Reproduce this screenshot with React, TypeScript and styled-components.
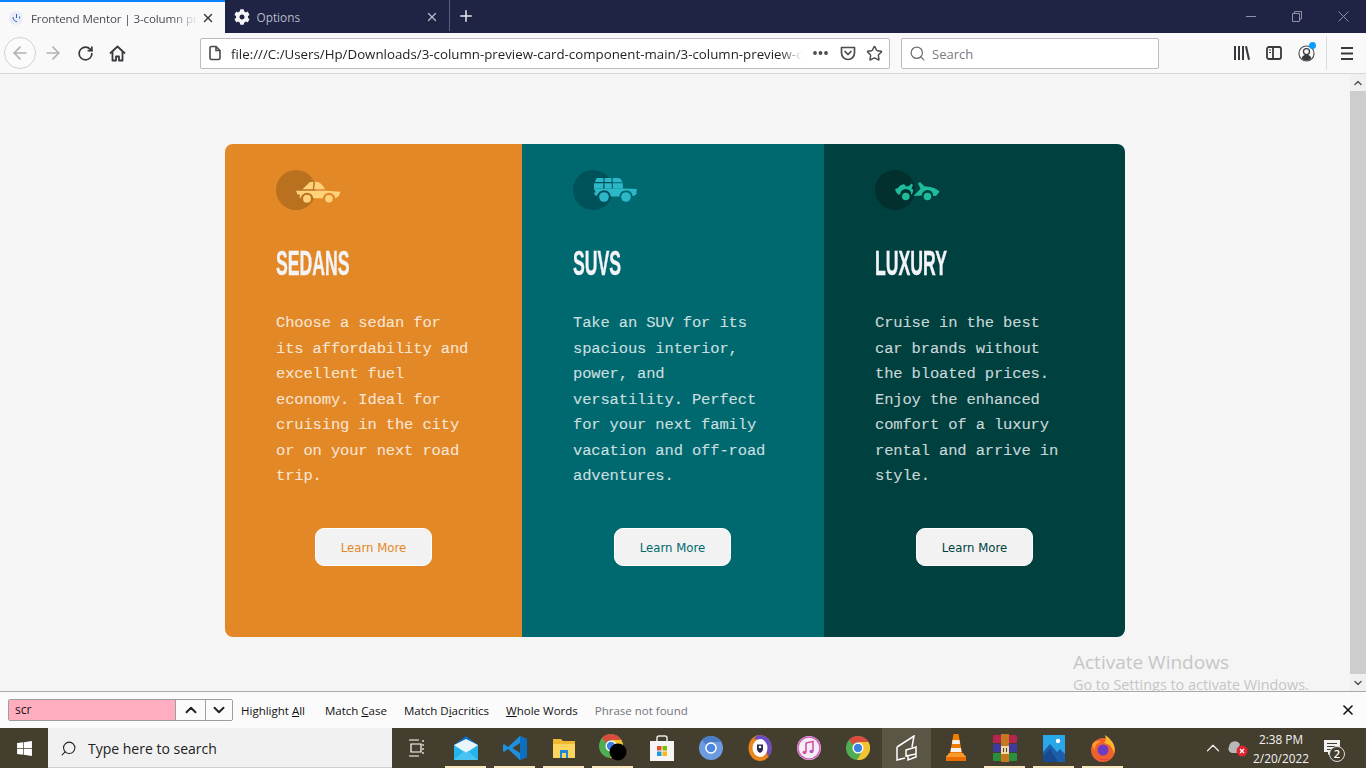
import React from 'react';
import styled, { createGlobalStyle } from 'styled-components';
import { FaCog, FaWindows } from 'react-icons/fa';
import { ArrowLeft, ArrowRight, RotateCw, X, Plus, ChevronUp, ChevronDown, Search as SearchGlyph, Star } from 'lucide-react';

const Global = createGlobalStyle`
  html, body { margin: 0; padding: 0; overflow: hidden; background: #f5f5f5; }
  * { box-sizing: border-box; }
`;

const UI = `"Open Sans", "Noto Sans", sans-serif`;

const Page = styled.div`
  width: 1366px; height: 768px; display: flex; flex-direction: column; overflow: hidden;
  font-family: ${UI}; color: #1a1a1a;
`;

/* ---------- tab strip ---------- */
const TabStrip = styled.div`
  height: 33px; flex: none; display: flex; background: #1f2444; align-items: stretch;
`;
const Tab = styled.div<{ $active?: boolean }>`
  width: 224.5px; flex: none; display: flex; align-items: center; padding: 0 10px 0 9px;
  gap: ${p => (p.$active ? 8 : 7)}px; font-size: ${p => (p.$active ? 11.6 : 11.8)}px;
  background: ${p => (p.$active ? '#f9f9fa' : 'transparent')};
  color: ${p => (p.$active ? '#4a4a56' : '#b9bbc8')};
  border-top: ${p => (p.$active ? '2px solid #0a84ff' : 'none')};
`;
const TabTitle = styled.span<{ $fade?: boolean }>`
  flex: 1; white-space: nowrap; overflow: hidden; padding-top: 1px;
  ${p => p.$fade && `letter-spacing: -0.14px; margin-right: -5px; -webkit-mask-image: linear-gradient(90deg, #000 84%, transparent 100%); mask-image: linear-gradient(90deg, #000 84%, transparent 100%);`}
`;
const NewTab = styled.div`
  width: 33px; display: flex; align-items: center; justify-content: center; border-left: 1px solid #5b5e78; margin: 0 0 2px; color: #e8e8ee;
`;
const WindowControls = styled.div`
  margin-left: auto; display: flex; color: #8e90a4;
`;
const WinCtl = styled.div`
  width: 46px; display: flex; align-items: center; justify-content: center;
`;

/* ---------- nav bar ---------- */
const NavBar = styled.div`
  height: 41px; flex: none; display: flex; align-items: center; background: #f9f9fa;
  border-bottom: 1px solid #d7d7db; padding: 0 0 0 4px; color: #4a4a4f;
`;
const BackCircle = styled.div`
  width: 32px; height: 32px; border-radius: 50%; border: 1px solid #d2d2d6; display: flex; align-items: center; justify-content: center; color: #b1b1b3; flex: none; background: #fbfbfb;
`;
const NavSlot = styled.div<{ $w?: number; $color?: string }>`
  width: ${p => p.$w ?? 32}px; flex: none; display: flex; align-items: center; justify-content: center;
  color: ${p => p.$color ?? '#4a4a4f'}; position: relative;
`;
const UrlBar = styled.div`
  margin-left: 67px; width: 690px; height: 31px; flex: none; background: #fff; border: 1px solid #bcbcbe; border-radius: 2px;
  display: flex; align-items: center; padding-left: 6px;
`;
const UrlText = styled.div`
  width: 571px; margin-left: 8px; font-size: 13.3px; white-space: nowrap; overflow: hidden; color: #1f1f1f; flex: none; padding-top: 1px;
  -webkit-mask-image: linear-gradient(90deg, #000 96%, transparent 100%); mask-image: linear-gradient(90deg, #000 96%, transparent 100%);
`;
const SearchBar = styled.div`
  margin-left: 11px; width: 258px; height: 31px; flex: none; background: #fff; border: 1px solid #bcbcbe; border-radius: 2px;
  display: flex; align-items: center; padding-left: 7px; gap: 6px; font-size: 13px; color: #7a7a7e; margin-right: 67px;
`;
const SearchLabel = styled.span`
  padding-top: 1px;
`;
const Dot = styled.span`
  position: absolute; right: 6px; top: -3px; width: 7px; height: 7px; border-radius: 50%; background: #0a9dff;
`;
const ToolSep = styled.div`
  width: 1px; height: 34px; background: #dcdcde; margin-left: 4px; flex: none;
`;

/* ---------- content ---------- */
const Middle = styled.div`
  flex: 1; min-height: 0; display: flex; position: relative; overflow: hidden; background: #f5f5f5;
`;
const Main = styled.main`
  flex: 1; padding: 70px 0 0 225px;
`;
const Card = styled.section`
  width: 900px; height: 493px; display: flex; border-radius: 8px; overflow: hidden;
`;
const Column = styled.article<{ $bg: string; $w: number }>`
  width: ${p => p.$w}px; flex: none; background: ${p => p.$bg}; display: flex; flex-direction: column; padding-top: 26px;
`;
const Body = styled.div`
  padding-left: 51px; display: flex; flex-direction: column;
`;
const IconWrap = styled.div`
  position: relative; width: 70px; height: 40px;
`;
const Circle = styled.div<{ $c: string }>`
  width: 40px; height: 40px; border-radius: 50%; background: ${p => p.$c};
`;
const CarSvg = styled.svg<{ $left: number; $top: number }>`
  position: absolute; left: ${p => p.$left}px; top: ${p => p.$top}px; overflow: visible;
`;
const Title = styled.h2`
  margin: 33px 0 0; height: 40px; line-height: 40px; font-family: "Liberation Sans", sans-serif;
  font-weight: 700; font-size: 35px; color: #f4f4f8; transform: scaleX(0.505); transform-origin: left center; white-space: nowrap;
  -webkit-text-stroke: 0.4px #f4f4f8;
`;
const Para = styled.p`
  margin: 28px 0 0; font-family: "Liberation Mono", monospace; font-size: 15.5px; letter-spacing: -0.15px; line-height: 25.55px;
  color: rgba(255,255,255,0.78); white-space: pre-line; -webkit-text-stroke: 0.15px rgba(255,255,255,0.6);
`;
const Learn = styled.button<{ $c: string; $nudge?: number }>`
  margin-top: auto; margin-bottom: 71px; margin-right: ${p => p.$nudge ?? 0}px; align-self: center; width: 117px; height: 38px; border-radius: 9px; border: 1px solid #fff; background: #f2f2f2;
  color: ${p => p.$c}; font-family: "DejaVu Sans", sans-serif; font-size: 11.7px; padding: 1px 0 0;
`;
const ScrollTrack = styled.div`
  width: 16px; flex: none; background: #f0f0f0; display: flex; flex-direction: column; align-items: center; color: #555; justify-content: space-between; padding: 0;
`;
const ScrollArrow = styled.div`
  height: 17px; display: flex; align-items: center; justify-content: center; flex: none;
`;
const ScrollThumb = styled.div`
  width: 100%; flex: 1; background: #cdcdcd;
`;
const Activate = styled.div`
  position: absolute; left: 1073px; top: 575px; color: #c6c6c6; white-space: nowrap; pointer-events: none; font-family: "Open Sans", sans-serif;
`;
const ActivateBig = styled.div`
  font-size: 19px; line-height: 26px;
`;
const ActivateSmall = styled.div`
  font-size: 14.4px; line-height: 20px; margin-top: 0;
`;

/* ---------- find bar ---------- */
const FindBar = styled.div`
  height: 37px; flex: none; border-top: 1px solid #a9a9ab; background: #fbfbfb; display: flex; align-items: center; padding: 0 0 0 8px; font-size: 11.5px; color: #111;
`;
const FindBox = styled.div`
  display: flex; height: 22px; border: 1px solid #9e9ea2; border-radius: 2px; overflow: hidden; flex: none;
`;
const FindInput = styled.div`
  width: 167px; background: #ffadbf; padding: 0 0 0 6px; font-size: 12px; line-height: 20px; border-right: 1px solid #9e9ea2;
`;
const FindBtn = styled.div<{ $sep?: boolean }>`
  width: ${p => (p.$sep ? 27 : 29)}px; background: #fbfbfb; display: flex; align-items: center; justify-content: center; color: #222;
  ${p => p.$sep && 'border-left: 1px solid #9e9ea2;'}
`;
const FindOption = styled.span<{ $ml: number; $muted?: boolean }>`
  margin-left: ${p => p.$ml}px; padding-top: 1px; white-space: nowrap; color: ${p => (p.$muted ? '#74747a' : '#111')};
`;
const FindClose = styled.div`
  margin-left: auto; width: 36px; display: flex; justify-content: center; color: #111;
`;

/* ---------- taskbar ---------- */
const Taskbar = styled.div`
  height: 40px; flex: none; background: #443e2e; display: flex; align-items: stretch; color: #fff;
`;
const StartBtn = styled.div`
  width: 48px; flex: none; display: flex; align-items: center; justify-content: center;
`;
const TaskSearch = styled.div`
  width: 344px; flex: none; background: #f1f1f1; color: #222; display: flex; align-items: center; padding: 1px 0 0 12px; gap: 11px; font-size: 14px;
  border-bottom: 1px solid #d0d0d0;
`;
const TaskSlot = styled.div<{ $run?: boolean; $active?: boolean }>`
  width: 49px; flex: none; display: flex; align-items: center; justify-content: center; position: relative;
  background: ${p => (p.$active ? '#5b5546' : 'transparent')};
  ${p => p.$run && `&::after { content: ''; position: absolute; bottom: 0; left: 4px; right: 4px; height: 2px; background: #f6e7c1; }`}
`;
const Tray = styled.div`
  flex: 1; display: flex; align-items: center; position: relative;
`;
const TrayIcon = styled.div<{ $ml: number }>`
  margin-left: ${p => p.$ml}px; display: flex; align-items: center; position: relative; flex: none;
`;
const Clock = styled.div`
  margin-left: -2px; width: 70px; text-align: center; font-size: 11.8px; line-height: 19px; color: #f2f2f2; flex: none; padding-top: 1px;
`;
const Badge = styled.span`
  position: absolute; right: -5px; bottom: -5px; width: 16px; height: 16px; border-radius: 50%; border: 1px solid #ddd; background: #443e2e; color: #fff; font-size: 11px; line-height: 14px; text-align: center; font-weight: 600;
`;

/* ---------- drawings ---------- */
const Favicon = () => (
  <svg width="14" height="14" viewBox="0 0 14 14"><circle cx="7" cy="7" r="7" fill="#e9edf8" /><path d="M7.5 3v4M4 6c0 3 2 4.5 4 4.5M10.5 5.5v2" stroke="#3b5cc4" strokeWidth="1" fill="none" /></svg>
);
const DocIcon = () => (
  <svg width="16" height="16" viewBox="0 0 16 16" fill="none" stroke="#4a4a4f" strokeWidth="1.6" style={{ flex: 'none' }}><path d="M3 3a1.5 1.5 0 0 1 1.5-1.5H9L13 5.5V13a1.5 1.5 0 0 1-1.5 1.5h-7A1.5 1.5 0 0 1 3 13z" /><path d="M9 1.5v4h4" /></svg>
);
const HomeIcon = () => (
  <svg width="17" height="17" viewBox="0 0 17 17" fill="none" stroke="#38383d" strokeWidth="1.8" strokeLinejoin="round"><path d="M1 8.5 8.5 1.5 16 8.5" /><path d="M3.5 7v8.5h3.5v-4h3v4h3.5V7" /></svg>
);
const Pocket = () => (
  <svg width="16" height="15" viewBox="0 0 16 15" fill="none" stroke="#4a4a4f" strokeWidth="1.7" strokeLinejoin="round"><path d="M1.5 1.5h13V7a6.5 6.5 0 0 1-13 0z" /><path d="M5 5.5 8 8.5l3-3" strokeLinecap="round" /></svg>
);
const Library = () => (
  <svg width="16" height="14" viewBox="0 0 16 14" fill="#38383d"><rect x="0" y="0" width="2" height="14" /><rect x="4" y="0" width="2" height="14" /><rect x="8" y="0" width="2" height="14" /><path d="M11 .5l2-.5 3 13.5-2 .5z" /></svg>
);
const Sidebar = () => (
  <svg width="16" height="14" viewBox="0 0 16 14" fill="none" stroke="#38383d" strokeWidth="1.8"><rect x="1" y="1" width="14" height="12" rx="2" /><path d="M7 1v12" /><path d="M3 4h2M3 6.5h2" strokeWidth="1.2" /></svg>
);
const Profile = () => (
  <svg width="17" height="17" viewBox="0 0 18 18" fill="none"><circle cx="9" cy="9" r="8" stroke="#4a4a4f" strokeWidth="1.2" /><circle cx="9" cy="7" r="3.2" fill="none" stroke="#38383d" strokeWidth="1.4" /><path d="M3.8 14c1-3 3-3.5 5.2-3.5s4.200.5 5.200 3.500a7 7 0 0 1-10.400 0z" fill="#38383d" /></svg>
);
const Hamburger = () => (
  <svg width="12" height="13" viewBox="0 0 12 13" fill="#38383d"><rect width="12" height="2" y="0" /><rect width="12" height="2" y="5.500" /><rect width="12" height="2" y="11" /></svg>
);
const Restore = () => (
  <svg width="10" height="11" viewBox="0 0 10 11" fill="none" stroke="currentColor"><path d="M.5 2.500h7v8h-7zM2.500 2.500V.5h7v7.500h-2" /></svg>
);
const Minimize = () => (<svg width="10" height="1" viewBox="0 0 10 1"><rect width="10" height="1" fill="currentColor" /></svg>);
const CloseThin = () => (<svg width="11" height="11" viewBox="0 0 11 11" stroke="currentColor" fill="none"><path d="M.5.5l10 10M10.500.5l-10 10" /></svg>);

const Sedan = () => (
  <CarSvg $left={20} $top={10.5} width="45" height="22" viewBox="0 0 45 22" fill="#ffd27a">
    <path d="M6.500 8.300 14 1 17.500.700 16.800 8.300zM19.200.700C24 .700 27 4 29 8.300H18z" />
    <path d="M0 9.800H30L44.300 10.800C44 13.500 42.500 16.500 39.300 17.300A6.300 6.300 0 0 0 26.800 17.300H17.300A6.300 6.300 0 0 0 4.800 17.300L3 15.500H4.500L3.500 13.500H1.500z" />
    <circle cx="11" cy="17.700" r="3.900" /><circle cx="33" cy="17.700" r="3.800" />
  </CarSvg>
);
const Suv = () => (
  <CarSvg $left={19.5} $top={8} width="45" height="25" viewBox="0 0 45 25" fill="#2cb8c8">
    <path d="M3.500 0H10.500V4H2zM11.700 0H18.500V4H11.500zM19.800 0H25C27 0 28.500 1.500 29.500 4.200H19.800zM1 5.200H10.500L10 10.500H1zM11.500 5.200H18.500L19 10.500H11.500zM19.800 5.200H29.800L30 10.500H20z" />
    <path d="M.5 10.500H30L43.500 11 44 13 43 14 44 15.500 41 18H39.700A6.800 6.800 0 0 0 26.300 18.500H17.700A6.800 6.800 0 0 0 5.500 15L4 17.500H2L1 14.500H3z" />
    <circle cx="11" cy="19" r="4.800" /><circle cx="33" cy="19" r="4.800" />
  </CarSvg>
);
const Luxury = () => (
  <CarSvg $left={20} $top={12} width="45" height="20" viewBox="0 0 45 20" fill="#1ebb9c">
    <path d="M0 7 3 6 5 3.500 9 2 11 4.500 14 4 16.500 1.500 18 3 16.500 6.500 18.500 8 17 12.500H16.300A5.500 5.500 0 0 0 5.300 12.500H3L1 10z" />
    <path d="M18.500 14 25.500 6.800 23 1.500 25 0 29.300 4.300C35 4.500 41 6 44.500 9.700L41 14H38.300A5.800 5.800 0 0 0 26.700 13.500z" />
    <circle cx="10.800" cy="14.500" r="3.800" /><circle cx="32.500" cy="14.500" r="3.800" />
  </CarSvg>
);

const TaskView = () => (
  <svg width="16" height="18" viewBox="0 0 16 18" fill="none" stroke="#fff" strokeWidth="1.200"><path d="M0 1h10M0 17h10M2 5h10v8H2z" /><path d="M14 1v2M14 5v2M14 9v2M14 13v2" /></svg>
);
const Mail = () => (
  <svg width="24" height="24" viewBox="0 0 24 24"><path d="M0 9 12 0 24 9V24H0z" fill="#0b6fc4" /><path d="M0 9H24V24H0z" fill="#25b4ee" /><path d="M0 9 12 17 24 9 12 3z" fill="#e8f5fc" /><path d="M0 24 10 15 12 17 14 15 24 24z" fill="#48c4f3" /></svg>
);
const VsCode = () => (
  <svg width="24" height="24" viewBox="0 0 24 24"><path d="M17 0 24 3V21L17 24 5 13 1 16 0 15V9L1 8 5 11zM17 7 9.500 12 17 17z" fill="#1f8fe0" /><path d="M17 0 24 3V21L17 24z" fill="#0d6fc0" /></svg>
);
const Folder = () => (
  <svg width="22" height="22" viewBox="0 0 22 22"><path d="M0 2H8L10 4H22V21H0z" fill="#f0b92f" /><path d="M0 7H22V21H0z" fill="#fbd55e" /><path d="M7 13H15V21H13V16H9V21H7z" fill="#1b8ad6" /></svg>
);
const ChromeLogo = ({ inner = '#3f7fe4' }: { inner?: string }) => (
  <svg width="24" height="24" viewBox="0 0 24 24"><circle cx="12" cy="12" r="12" fill="#4fae52" /><path d="M12 0A12 12 0 0 1 22.400 6H12A6 6 0 0 0 6.800 9L3 3.500A12 12 0 0 1 12 0z" fill="#dd4b3e" /><path d="M22.400 6A12 12 0 0 1 11 24L17 14 12 6z" fill="#f4c430" /><circle cx="12" cy="12" r="5.500" fill="#fff" /><circle cx="12" cy="12" r="4.200" fill={inner} /></svg>
);
const ChromeBlack = () => (
  <svg width="28" height="28" viewBox="0 0 28 28"><circle cx="12" cy="12" r="12" fill="#4fae52" /><path d="M12 0A12 12 0 0 1 22.400 6H12A6 6 0 0 0 6.800 9L3 3.500A12 12 0 0 1 12 0z" fill="#dd4b3e" /><path d="M22.400 6A12 12 0 0 1 11 24L17 14 12 6z" fill="#f4c430" /><circle cx="12" cy="12" r="5.500" fill="#fff" /><circle cx="12" cy="12" r="4.200" fill="#3f7fe4" /><circle cx="19" cy="18" r="8.500" fill="#000" /></svg>
);
const StoreBag = () => (
  <svg width="24" height="26" viewBox="0 0 24 26"><path d="M7 6V3a2 2 0 0 1 2-2h6a2 2 0 0 1 2 2v3" fill="none" stroke="#e8e8e8" strokeWidth="1.500" /><rect y="6" width="24" height="20" fill="#f5f5f5" /><rect x="7" y="11" width="4.500" height="4.500" fill="#e8502c" /><rect x="12.500" y="11" width="4.500" height="4.500" fill="#7fba00" /><rect x="7" y="16.500" width="4.500" height="4.500" fill="#1b9ae0" /><rect x="12.500" y="16.500" width="4.500" height="4.500" fill="#fcb714" /></svg>
);
const Chromium = () => (
  <svg width="24" height="24" viewBox="0 0 24 24"><circle cx="12" cy="12" r="12" fill="#6d9be0" /><path d="M12 0A12 12 0 0 1 22.400 6H12A6 6 0 0 0 6.800 9L3 3.500A12 12 0 0 1 12 0z" fill="#4a7cc8" /><circle cx="12" cy="12" r="5.800" fill="#fff" /><circle cx="12" cy="12" r="4.300" fill="#4a86e0" /></svg>
);
const Shield = () => (
  <svg width="24" height="26" viewBox="0 0 24 26"><ellipse cx="12" cy="13" rx="11.500" ry="13" fill="#e9861c" /><path d="M12 0A11.500 13 0 0 1 23.500 13C23.500 16 22 20 20 22L16 7 6 3.500A11 11 0 0 1 12 0z" fill="#6a4bc8" /><ellipse cx="12" cy="13" rx="7.500" ry="9" fill="#fff" /><path d="M9 9.500h6v4.500c0 2-1.500 3-3 4-1.500-1-3-2-3-4z" fill="#2a2a50" /><circle cx="12" cy="12" r="1.300" fill="#fff" /></svg>
);
const Itunes = () => (
  <svg width="24" height="24" viewBox="0 0 24 24"><circle cx="12" cy="12" r="12" fill="#f3eef6" /><circle cx="12" cy="12" r="11" fill="none" stroke="#d35fc0" strokeWidth="1.500" /><path d="M9 16V7l7-1.500V15" fill="none" stroke="#d84a9a" strokeWidth="1.500" /><ellipse cx="7.500" cy="16.500" rx="2" ry="1.700" fill="#e0509a" /><ellipse cx="14.500" cy="15.500" rx="2" ry="1.700" fill="#b84fd0" /></svg>
);
const Snip = () => (
  <svg width="22" height="27" viewBox="0 0 22 27" fill="none" stroke="#fff" strokeWidth="1.500"><path d="M1 12 18 1 16 12M1 12V25L9 23M10 15 20 12V19L10 21zM12 21V25L20 22V19" /></svg>
);
const Vlc = () => (
  <svg width="22" height="28" viewBox="0 0 22 28"><path d="M8.500 0h5L17 19H5z" fill="#f07c00" /><path d="M7.500 6h7L15 10H7zM6 14h10l.5 4h-11z" fill="#f4f0ea" /><path d="M1 22h20v5H1z" fill="#e96d00" /><path d="M4 19h14l3 4H1z" fill="#f59a2e" /></svg>
);
const Winrar = () => (
  <svg width="24" height="28" viewBox="0 0 24 28"><rect y="1" width="24" height="8" rx="1" fill="#b5244e" /><rect y="10" width="24" height="8" rx="1" fill="#3f3a9b" /><rect y="19" width="24" height="8" rx="1" fill="#2a8f3c" /><rect x="8" y="0" width="8" height="28" fill="#c7781f" /><rect x="8" y="12" width="8" height="8" fill="#f0d9a6" /><path d="M10 14h1v4h-1zM13 14h1v4h-1z" fill="#443" /></svg>
);
const Photos = () => (
  <svg width="22" height="27" viewBox="0 0 22 27"><rect width="22" height="27" fill="#2aa7e8" /><circle cx="15" cy="6" r="2.200" fill="#fff" /><path d="M0 27V17L7 9 14 17 17 14 22 19V27z" fill="#1c5fa8" /><path d="M0 27V21L7 14 15 27z" fill="#174a90" /></svg>
);
const Firefox = () => (
  <svg width="24" height="27" viewBox="0 0 24 27"><circle cx="12" cy="15" r="12" fill="#f0602c" /><path d="M14 0C22 5 25 12 23 19 22 12 18 9 13 8 15 6 15 3 14 0z" fill="#ffb52e" /><path d="M1 10C3 6 7 5 10 7 5 8 3 12 4 16z" fill="#ff9a2e" /><circle cx="12" cy="15" r="5.500" fill="#6d3bc4" /><path d="M6 23a12 12 0 0 0 14 0C16 25 10 25 6 23z" fill="#d6246e" /></svg>
);
const NetErr = () => (
  <svg width="20" height="18" viewBox="0 0 20 18"><path d="M1 8a6 6 0 0 1 11-3l-3 9H4a4 4 0 0 1-3-6z" fill="#b8b8b8" /><circle cx="14" cy="12" r="5.500" fill="#e0232e" /><path d="M12 10l4 4M16 10l-4 4" stroke="#fff" strokeWidth="1.300" /></svg>
);
const ActionCenter = () => (
  <svg width="16" height="17" viewBox="0 0 16 17"><path d="M0 0H16V12H7L4 15V12H0z" fill="#f2f2f2" /><path d="M3 3.500H13M3 6.500H13M3 9.500H9" stroke="#443e2e" /></svg>
);

const cards = [
  { bg: '#e38826', w: 297, circle: '#b9711f', Car: Sedan, title: 'SEDANS', btn: '#e38826', nudge: 0,
    text: 'Choose a sedan for\nits affordability and\nexcellent fuel\neconomy. Ideal for\ncruising in the city\nor on your next road\ntrip.' },
  { bg: '#006970', w: 302, circle: '#00525a', Car: Suv, title: 'SUVS', btn: '#006970', nudge: 1,
    text: 'Take an SUV for its\nspacious interior,\npower, and\nversatility. Perfect\nfor your next family\nvacation and off-road\nadventures.' },
  { bg: '#004140', w: 301, circle: '#01302f', Car: Luxury, title: 'LUXURY', btn: '#004140', nudge: 0,
    text: 'Cruise in the best\ncar brands without\nthe bloated prices.\nEnjoy the enhanced\ncomfort of a luxury\nrental and arrive in\nstyle.' },
];

const taskApps: { I: React.FC; run?: boolean; active?: boolean }[] = [
  { I: TaskView }, { I: Mail, run: true }, { I: VsCode, run: true }, { I: Folder, run: true }, { I: ChromeBlack, run: true },
  { I: StoreBag }, { I: Chromium }, { I: Shield }, { I: Itunes }, { I: ChromeLogo as React.FC }, { I: Snip, active: true },
  { I: Vlc }, { I: Winrar, run: true }, { I: Photos, run: true }, { I: Firefox, run: true },
];

export default function App() {
  return (
    <Page>
      <Global />
      <TabStrip>
        <Tab $active>
          <Favicon />
          <TabTitle $fade>Frontend Mentor | 3-column preview card component</TabTitle>
          <X size={14} strokeWidth={2.4} color="#38383d" />
        </Tab>
        <Tab>
          <FaCog size={16} color="#f4f4f6" />
          <TabTitle>Options</TabTitle>
          <X size={14} strokeWidth={2.2} color="#b9bbc8" />
        </Tab>
        <NewTab><Plus size={18} strokeWidth={2} /></NewTab>
        <WindowControls>
          <WinCtl><Minimize /></WinCtl>
          <WinCtl><Restore /></WinCtl>
          <WinCtl><CloseThin /></WinCtl>
        </WindowControls>
      </TabStrip>
      <NavBar>
        <BackCircle><ArrowLeft size={20} strokeWidth={2} /></BackCircle>
        <NavSlot $w={33} $color="#b1b1b3"><ArrowRight size={20} strokeWidth={2} /></NavSlot>
        <NavSlot $color="#38383d"><RotateCw size={17} strokeWidth={2.4} /></NavSlot>
        <NavSlot><HomeIcon /></NavSlot>
        <UrlBar>
          <DocIcon />
          <UrlText>file:///C:/Users/Hp/Downloads/3-column-preview-card-component-main/3-column-preview-card-component-main/index.html</UrlText>
          <NavSlot $w={36}><svg width="15" height="4" viewBox="0 0 15 4" fill="#4a4a4f"><circle cx="2" cy="2" r="1.900" /><circle cx="7.500" cy="2" r="1.900" /><circle cx="13" cy="2" r="1.900" /></svg></NavSlot>
          <NavSlot $w={20}><Pocket /></NavSlot>
          <NavSlot $w={32}><Star size={17} strokeWidth={2} color="#4a4a4f" /></NavSlot>
        </UrlBar>
        <SearchBar>
          <SearchGlyph size={17} strokeWidth={1.700} color="#6a6a6e" />
          <SearchLabel>Search</SearchLabel>
        </SearchBar>
        <NavSlot><Library /></NavSlot>
        <NavSlot><Sidebar /></NavSlot>
        <NavSlot><Profile /><Dot /></NavSlot>
        <ToolSep />
        <NavSlot $w={40}><Hamburger /></NavSlot>
      </NavBar>
      <Middle>
        <Main>
          <Card>
            {cards.map(c => (
              <Column key={c.title} $bg={c.bg} $w={c.w}>
                <Body>
                  <IconWrap>
                    <Circle $c={c.circle} />
                    <c.Car />
                  </IconWrap>
                  <Title>{c.title}</Title>
                  <Para>{c.text}</Para>
                </Body>
                <Learn $c={c.btn} $nudge={c.nudge}>Learn More</Learn>
              </Column>
            ))}
          </Card>
        </Main>
        <ScrollTrack>
          <ScrollArrow><ChevronUp size={12} strokeWidth={3} /></ScrollArrow>
          <ScrollThumb />
          <ScrollArrow><ChevronDown size={12} strokeWidth={3} /></ScrollArrow>
        </ScrollTrack>
        <Activate>
          <ActivateBig>Activate Windows</ActivateBig>
          <ActivateSmall>Go to Settings to activate Windows.</ActivateSmall>
        </Activate>
      </Middle>
      <FindBar>
        <FindBox>
          <FindInput>scr</FindInput>
          <FindBtn><ChevronUp size={18} strokeWidth={2.600} /></FindBtn>
          <FindBtn $sep><ChevronDown size={18} strokeWidth={2.600} /></FindBtn>
        </FindBox>
        <FindOption $ml={8}>Highlight <u>A</u>ll</FindOption>
        <FindOption $ml={20}>Match <u>C</u>ase</FindOption>
        <FindOption $ml={17}>Match D<u>i</u>acritics</FindOption>
        <FindOption $ml={17}><u>W</u>hole Words</FindOption>
        <FindOption $ml={17} $muted>Phrase not found</FindOption>
        <FindClose><X size={16} strokeWidth={2.400} /></FindClose>
      </FindBar>
      <Taskbar>
        <StartBtn><FaWindows size={17} /></StartBtn>
        <TaskSearch>
          <SearchGlyph size={17} strokeWidth={1.500} style={{ transform: 'scaleX(-1)' }} />
          <span>Type here to search</span>
        </TaskSearch>
        {taskApps.map((a, i) => (
          <TaskSlot key={i} $run={a.run} $active={a.active}><a.I /></TaskSlot>
        ))}
        <Tray>
          <TrayIcon $ml={75}><ChevronUp size={22} strokeWidth={1.300} color="#f0f0f0" /></TrayIcon>
          <TrayIcon $ml={4}><NetErr /></TrayIcon>
          <Clock>2:38 PM<br />2/20/2022</Clock>
          <TrayIcon $ml={8}><ActionCenter /><Badge>2</Badge></TrayIcon>
        </Tray>
      </Taskbar>
    </Page>
  );
}
